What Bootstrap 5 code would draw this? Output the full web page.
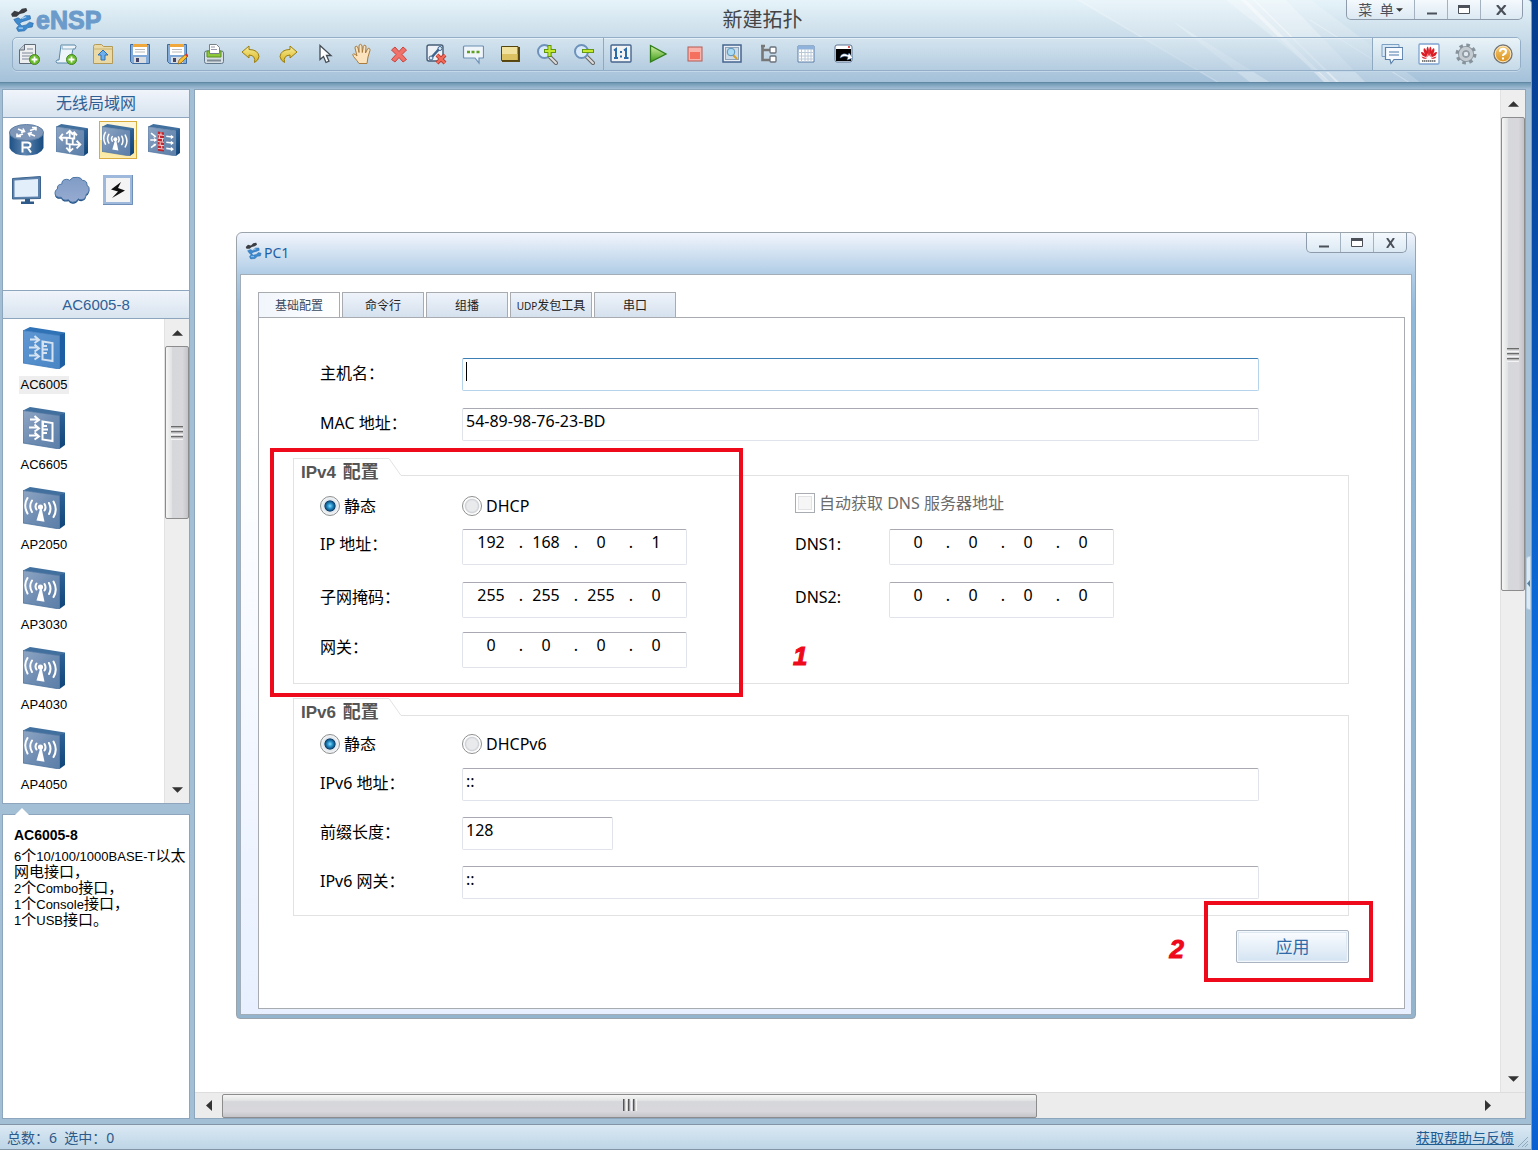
<!DOCTYPE html>
<html lang="zh-CN">
<head>
<meta charset="utf-8">
<meta name="viewport" content="width=device-width, initial-scale=1">
<title>eNSP</title>
<link href="https://cdn.jsdelivr.net/npm/bootstrap@5.3.0/dist/css/bootstrap.min.css" rel="stylesheet">
<style>
:root{--ui:"Noto Sans","Noto Sans CJK SC",sans-serif;--arial:"Liberation Sans","Noto Sans CJK SC",sans-serif;--line:#8ea6bd;--frame:#a3bfd6;--ink:#2f5f95;--alert:#ee0a1a}
body{font-family:var(--ui);font-size:16px;color:#000;background:linear-gradient(#053b8c,#0d6fe0 60%,#0d74e6 85%,#0a5fd0);padding-right:6px}
button{padding:0;border:0;background:none;color:inherit}
.app-shell{background:var(--frame);border-right:1px solid #7a9db8;border-top-right-radius:4px}
.app-head{height:83px;background:linear-gradient(#e6f3f9,#c9dce9 45%,#a4c1da);border-bottom:1px solid #6289a4;border-top-right-radius:4px;overflow:hidden}
.streaks{right:0;top:0;width:640px;height:83px;pointer-events:none}
.head-grid{display:grid;grid-template-columns:1fr auto 1fr;height:37px;padding:0 8px 0 2px}
.brand-text{font:bold 25px/30px var(--arial);-webkit-text-stroke:1px #6b9bcb;color:#6b9bcb}
.doc-title{font-size:20px;line-height:40px;color:#444}
.win-ctl{height:20px;border:1px solid #8d9bab;border-top:0;border-radius:0 0 5px 5px;background:linear-gradient(#f4f9fd,#dce9f3);color:#4b5059}
.win-ctl button{width:33px;height:100%;border-left:1px solid #a4b2c0;display:flex;align-items:center;justify-content:center}
.win-ctl button:first-child{border-left:0}
.win-ctl .menu-btn{width:67px;font-size:14px;line-height:16px;white-space:pre;gap:2px}
.win-ctl .wide-btn{width:42px}
.tool-strip{margin:0 10px 0 12px;height:34px;border:1px solid #93aec6;border-radius:5px;background:linear-gradient(rgba(220,234,243,.6),rgba(186,208,226,.5));box-shadow:inset 0 1px #e6f1f7,0 1px #c3d8e8}
.tool-group{gap:6px}
.tool-group button{width:31px;height:100%;display:flex;align-items:center;justify-content:center}
.tool-group svg{width:22px;height:22px}
.group-a{padding-right:4px;border-right:1px solid #8fa9c1;margin-right:1px}
.group-c{border-left:1px solid #8fa9c1;padding:0 2px 0 3px;background:linear-gradient(#e9f3f8,#c6dae8);border-radius:0 4px 4px 0}
.work{min-height:0;padding:6px 5px 5px 2px;gap:4px;background:linear-gradient(#6f97b3,var(--frame) 6px)}
.side-col{width:188px}
.side-box{border:1px solid var(--line);background:#fff}
.side-title{height:28px;line-height:27px;text-align:center;color:var(--ink);background:linear-gradient(#f0f4fb,#d8e4ef);border-bottom:1px solid var(--line);margin:0;font-weight:400}
.title-han{font-size:16px;font-family:var(--ui)}
.title-lat{height:29px;font-size:15px;font-family:var(--arial);border-top:1px solid var(--line)}
.palette{height:172px;padding-top:3px;display:grid;grid-template-columns:repeat(4,46px);grid-auto-rows:38px;row-gap:12px;justify-items:center;align-content:start}
.palette button{width:38px;height:38px;display:flex;align-items:center;justify-content:center;border:1px solid transparent}
.palette button.picked{border:1px solid #d9ac3f;background:linear-gradient(#fdf5d8 50%,#fbe084 50%,#fdedb0)}
.dev-list{height:484px}
.dev-items{padding:8px 0 0 16px}
.dev-items button{display:flex;flex-direction:column;align-items:center;gap:7px;height:80px;font:13px/18px var(--arial)}
.dev-items span{width:50px;text-align:center}
.dev-items .picked span{background:#eee}
.vbar{width:25px;background:#eee;border-left:1px solid #e2e2e2}
.vbar button,.hbar button{flex:none;width:27px;height:27px;display:flex;align-items:center;justify-content:center}
.vbar button{width:24px}
.vbar .thumb{width:24px;border:1px solid #8c8c8c;border-radius:2px;background:linear-gradient(90deg,#f6f6f6,#e2e3e4 25%,#d6d7da 30%,#d8d8dc 75%,#c3c3c9)}
.hbar{height:26px;background:#ececec;border-top:1px solid #ddd}
.hbar .thumb{height:24px;border:1px solid #8c8c8c;border-radius:2px;background:linear-gradient(#f6f6f6,#e2e3e4 25%,#d6d7da 30%,#d8d8dc 75%,#c3c3c9)}
.thumb{display:flex;align-items:center;justify-content:center}
.side-thumb{height:173px}
.main-thumb{flex:0 0 474px}
.low-thumb{flex:0 0 815px}
.info{margin-top:10px;padding:11px 0 0 11px;font:13px/16px var(--arial);position:relative}
.info::before{content:"";position:absolute;left:12px;top:-7px;border:7px solid transparent;border-top:0;border-bottom-color:#fff}
.info h3{font:bold 14px/18px var(--arial);margin:0 0 4px}
.info .han{font-size:15px;line-height:16px}
.info div{white-space:nowrap;height:16px}
.canvas-frame{border:1px solid var(--line);background:#fff}
.sheet{position:relative;background:#fff}
.flap{right:0;top:473px;width:5px;height:54px;background:#dceaf3;border:1px solid #b8cede;border-radius:3px 0 0 3px}
.flap svg{position:absolute;left:0;top:23px}
.status{height:26px;border-top:1px solid #8395a5;border-bottom:1px solid #8395a5;background:linear-gradient(#dbe9f4,#bdd5e6);padding:0 3px 0 7px;font-size:14px;line-height:26px;color:#2d5a88}
.status a{color:#1e5c94}
/* PC settings window */
.pc-win{position:absolute;left:41px;right:84px;top:142px;border:1px solid #9ba3ab;border-radius:6px 6px 4px 4px;padding:0 3px 3px 3px;background:linear-gradient(#f2f5fc,#b0cde6 41px,#8fb8d9 80px,#94b3cc)}
.pc-head{height:41px;padding:0 5px 0 5px}
.pc-name{font-size:14px;line-height:40px;color:#1f5fa5;padding-left:1px}
.pc-body{border:1px solid #a3adb8;background:linear-gradient(#fff 20%,#e8f0ff);padding:17px 6px 5px 17px}
.tab-row{gap:2px;border:0;flex-wrap:nowrap}
.tab-row .nav-link{width:82px;height:25px;padding:0;border:1px solid #a8acb0;border-bottom:0;border-radius:0;font-size:12px;line-height:25px;color:#222;text-align:center;background:linear-gradient(#eef3fa,#d5e1ee);margin:0;white-space:nowrap}
.tab-row .nav-link.active{background:linear-gradient(90deg,#f1f6fc,#fff);color:#3a4a5e;border-color:#a8acb0}
.tab-row small{font-size:10px}
.pane{border:1px solid #a8acb0;background:#fff;padding:40px 55px 45px 34px}
.field-row{display:flex;align-items:center;padding:0 90px 0 27px;margin-bottom:17px}
.field-row .cap{padding-bottom:3px}
.cap{flex:none;width:142px}
.txt{height:33px;border:1px solid #e1e3ea;border-top-color:#a9a9b1;border-radius:2px;padding:0 3px 7px;font-size:16px;line-height:24px;outline:0;background:#fff;min-width:0}
.txt.hot{border-color:#b5d3ea;border-top-color:#3b7fb5}
.caret{position:absolute;left:4px;top:4px;width:1px;height:19px;background:#000}
.len{width:151px}
.grp{position:relative;margin-bottom:14px}
.grp legend{display:flex;float:none;height:18px;margin:0;font:bold 17px/26px var(--arial);color:#555}
.grp legend span{width:96px;padding-left:7px;border:solid #e2e2e2;border-width:1px 0 0 1px;white-space:nowrap}
.grp legend em{font-size:18px;font-style:normal;margin-left:2px}
.grp legend svg{flex:none;width:12px;height:18px}
.grp legend i{flex:1;border-bottom:1px solid #e2e2e2}
.grp-in{border:solid #e2e2e2;border-width:0 1px 1px 1px}
.v4{padding:15px 0 15px 26px}
.v6{padding:13px 0 16px 0}
.v6 .field-row{padding:0 89px 0 26px;margin-bottom:16px}
.v6 .pick-row{padding-left:26px;margin-bottom:9px}
.v4-left{width:475px}
.pick-row{display:flex;height:30px;align-items:center;margin-bottom:8px}
.opt{display:flex;align-items:center;gap:4px;width:142px}
.opt input{flex:none;margin:0;width:20px;height:20px;appearance:none}
.opt input[type=radio]{border-radius:50%;border:1px solid #8e8f8f;background:radial-gradient(#e8eaec 0 40%,#cfd3d7 52%,#fff 62%)}
.opt input[type=radio]:checked{background:radial-gradient(circle closest-side,#8fdcfa 0,#2a9ad4 25%,#0b3f6c 58%,#dfe5ea 66%,#f4f6f8 100%)}
.opt input[type=checkbox]{border:1px solid #a9adb1;border-radius:0;background:#f6f6f6;box-shadow:inset 0 0 0 2px #fff,inset 0 0 0 3px #e3e3e6}
.wide-opt{width:auto;color:#6b6b6b;padding-bottom:6px}
.ip-row{display:flex;align-items:center;margin-bottom:17px}
.ip-row:nth-child(3){margin-bottom:14px}
.ip-row .cap{padding-bottom:6px}
.cap.dns-cap{width:94px}
.ip{display:flex;width:225px;height:36px;border:1px solid #e1e3ea;border-top-color:#a9a9b1;border-radius:2px;padding:0 8px}
.ip input{width:40px;height:24px;border:0;padding:0;text-align:center;outline:0;font-size:16px;background:none}
.ip b{width:15px;font-weight:400;line-height:24px;text-align:right;padding-right:3px}
.apply{width:113px;height:33px;border:1px solid #a9b4c0;border-radius:2px;background:linear-gradient(#fbfdff,#d3e3f2);box-shadow:inset 0 0 0 1px #f3f8fd,inset 0 0 0 2px #dde8f3;color:#2f6aa8;font-size:17px;line-height:28px}
/* red call-outs drawn over the form */
.ring{position:absolute;border:4px solid var(--alert);pointer-events:none;z-index:2}
.ring-v4{left:-23px;top:-28px;width:473px;height:249px}
.ring-go{right:-24px;top:-29px;width:169px;height:81px}
.num{position:absolute;font:italic bold 26px/27px var(--arial);color:var(--alert);-webkit-text-stroke:1px var(--alert)}
.num-1{left:500px;top:167px}
.num-2{right:165px;top:6px}
</style>
<script src="https://cdn.jsdelivr.net/npm/bootstrap@5.3.0/dist/js/bootstrap.bundle.min.js"></script>
</head>
<body class="vh-100 d-flex overflow-hidden">
<svg width="0" height="0" class="position-absolute">
<defs>
<linearGradient id="gF" x1="0" y1="0" x2="1" y2="1"><stop offset="0" stop-color="#8fa6c4"/><stop offset=".5" stop-color="#6f8db3"/><stop offset="1" stop-color="#5c7fa8"/></linearGradient>
<linearGradient id="gB" x1="0" y1="0" x2="1" y2="1"><stop offset="0" stop-color="#5f98d3"/><stop offset="1" stop-color="#4a85c4"/></linearGradient>
<linearGradient id="gS" x1="0" y1="0" x2="0" y2="1"><stop offset="0" stop-color="#2e6298"/><stop offset="1" stop-color="#0f4478"/></linearGradient>
<linearGradient id="gR" x1="0" y1="0" x2="1" y2="0"><stop offset="0" stop-color="#1d5186"/><stop offset=".45" stop-color="#5d85b0"/><stop offset="1" stop-color="#174b80"/></linearGradient>
<linearGradient id="gC" x1="0" y1="0" x2="0" y2="1"><stop offset="0" stop-color="#7f9cc6"/><stop offset="1" stop-color="#97abd0"/></linearGradient>
<linearGradient id="gY" x1="0" y1="0" x2="0" y2="1"><stop offset="0" stop-color="#f8ee9a"/><stop offset="1" stop-color="#d9b31c"/></linearGradient>
<linearGradient id="gG" x1="0" y1="0" x2="0" y2="1"><stop offset="0" stop-color="#d5f2a5"/><stop offset="1" stop-color="#3f9c1b"/></linearGradient>
<linearGradient id="gO" x1="0" y1="0" x2="0" y2="1"><stop offset="0" stop-color="#f6cd7a"/><stop offset="1" stop-color="#d98e14"/></linearGradient>
</defs>
<symbol id="box" viewBox="0 0 42 42"><path d="M0 3.500 7 0 42 5.500 36.500 9z" fill="#41709f"/><path d="M36.500 8 42 5.500V38l-5.500 4z" fill="url(#gS)"/><path d="M0 3.500 36.500 8.500V42L0 36z" fill="url(#gF)" stroke="#4b729d" stroke-width=".8"/></symbol>
<symbol id="boxB" viewBox="0 0 42 42"><path d="M0 3.500 7 0 42 5.500 36.500 9z" fill="#2f72b5"/><path d="M36.500 8 42 5.500V38l-5.500 4z" fill="#1d5ea3"/><path d="M0 3.500 36.500 8.500V42L0 36z" fill="url(#gB)" stroke="#3c7abb" stroke-width=".8"/></symbol>
<symbol id="acG" viewBox="0 0 42 42"><g fill="none" stroke="#fff" stroke-width="2"><path d="M7 12.500h8M11.500 9l4.500 4-4.500 3M6 20.500h9M11.500 17.500l4.500 4-4.500 3M6 28.500h9M11.500 25.500l4.500 4-4.500 3"/><path d="M19.500 14.500l10 1.500v18l-10-1.500zM20 19h4M20 22.500h5M20 26h4M20 18v-3"/></g></symbol>
<symbol id="apG" viewBox="0 0 42 42"><path d="M18 18.500 13.500 33.500l8 1.300z" fill="#fff"/><circle cx="17.500" cy="20" r="2.600" fill="#fff"/><g fill="none" stroke="#fff" stroke-width="2" stroke-linecap="round"><path d="M13.500 16.500q-2 2.800 0 6M9 13.500q-3.500 5.500 0 11.500M4.500 11q-4.500 7 0 15.500M21.500 17q2 3.500 0 6.500M26 16q3 6 0 11M30.500 14.500q4.500 8 0 15.500"/></g></symbol>
<symbol id="mark" viewBox="0 0 24 24"><path d="M1 6.500 4 3.500 8 4.500 11 1.500 15 1 16 3.500 13 5.500 9 6.500 6 9 2 9z" fill="#3a3d42"/><path d="M3.500 11.500 7.500 10 10 11.500 14 8 18.500 8 19 11 15 12.500 11 13.500 9 15.500 11 17.500 15 16.500 18 14 21.500 15 20.500 18.500 16.500 19 13.500 22 7.500 22.500 6 19.500 8 17 5.500 14.500z" fill="#3d8ace" stroke="#2565a6" stroke-width=".6"/><path d="M11 10.500 15 9M8 19.500l4 0" stroke="#a8d2f3"/></symbol>
<symbol id="up" viewBox="0 0 12 6"><path d="M0 6 6 0l6 6z" fill="#333"/></symbol>
<symbol id="down" viewBox="0 0 12 6"><path d="M0 0h12L6 6z" fill="#333"/></symbol>
<symbol id="grip" viewBox="0 0 13 15"><path d="M0 1.500h12M0 6.500h12M0 11.500h12" stroke="#6b6b6b"/><path d="M0 2.500h12M0 7.500h12M0 12.500h12" stroke="#b4b4b4"/><path d="M0 4.500h12M0 9.500h12M0 14.500h12" stroke="#f4f4f4"/></symbol>
<symbol id="plus" viewBox="0 0 10 10"><circle cx="5" cy="5" r="4.600" fill="#6cbb2e" stroke="#3c7f17" stroke-width=".8"/><path d="M5 2.300v5.400M2.300 5h5.400" stroke="#fff" stroke-width="1.600"/></symbol>
</svg>

<div class="app-shell d-flex flex-column flex-grow-1">
<header class="app-head position-relative">
  <svg class="streaks position-absolute" viewBox="0 0 640 83"><g fill="#fff"><path d="M190 0h230l110 83H330z" opacity=".18"/><path d="M335 0h60l80 83H440z" opacity=".25"/><path d="M350 0h5l85 83h-6zM362 0h2l85 83h-3z" opacity=".4"/><path d="M190 0l140 83h-3L186 0z" opacity=".3"/><path d="M420 20l100 63h-2L418 20z" opacity=".3"/><path d="M280 20l100 63h-20z" opacity=".25"/></g></svg>
  <div class="head-grid position-relative">
    <div class="d-flex align-items-center ps-1"><svg width="26" height="26" class="ms-1"><use href="#mark"/></svg><span class="brand-text">eNSP</span></div>
    <div class="doc-title">新建拓扑</div>
    <div class="win-ctl d-flex ms-auto">
      <button class="menu-btn">菜  单<svg width="7" height="4"><use href="#down"/></svg></button>
      <button aria-label="最小化"><svg width="11" height="11"><path d="M1 9.500h10" stroke="#4b5059" stroke-width="2"/></svg></button>
      <button aria-label="最大化"><svg width="12" height="10"><path d="M.5.500h11v8H.5z" fill="#fff" stroke="#4b5059"/><path d="M0 1.500h12" stroke="#4b5059" stroke-width="3"/></svg></button>
      <button class="wide-btn" aria-label="关闭"><svg width="11" height="10"><path d="M1 0l8.500 10M9.500 0 1 10" stroke="#4b5059" stroke-width="2.200"/></svg></button>
    </div>
  </div>
  <div class="tool-strip d-flex position-relative">
    <div class="tool-group group-a d-flex">
      <button aria-label="新建拓扑"><svg viewBox="0 0 22 22"><path d="M6.500 1.500h11v19H1.500V7z" fill="#eceef0" stroke="#5f6b78"/><path d="M6.500 1.500V7h-5" fill="#c4cad1" stroke="#5f6b78"/><path d="M9 6h6M4 10h11M4 13h11M4 16h8" stroke="#a2abb5" stroke-width="1.400"/><use href="#plus" x="11" y="11" width="11" height="11"/></svg></button>
      <button aria-label="新建试卷"><svg viewBox="0 0 22 22"><path d="M6 2h14q2 1 0 4h-2l-3 14H2q-2-1 0-3h2z" fill="#eef5fa" stroke="#5b88a8"/><path d="M6 2q2 1 1 4h12" fill="none" stroke="#8fb0c6"/><use href="#plus" x="11" y="11" width="11" height="11"/></svg></button>
      <button aria-label="打开"><svg viewBox="0 0 22 22"><path d="M1.500 3.500q0-2 2-2h6l2 2h9v17h-19z" fill="#ead9a5" stroke="#b39a58"/><path d="M1.500 6h19" stroke="#c9b273"/><path d="M11 7l5 5h-3v5H9v-5H6z" fill="#6db0ee" stroke="#2e70b5"/></svg></button>
      <button aria-label="保存"><svg viewBox="0 0 22 22"><path d="M1.500 1.500h19v19h-17l-2-2z" fill="#82abd9" stroke="#3d6ca3"/><path d="M4 1h14v3H4z" fill="#f0a83c"/><path d="M4 4h14v8H4z" fill="#fff"/><path d="M6 6.500h10M6 9h10" stroke="#bbb"/><path d="M5 14h12v6H5z" fill="#dadde0"/><path d="M7 15h3v4H7z" fill="#446"/></svg></button>
      <button aria-label="另存为"><svg viewBox="0 0 22 22"><path d="M1.500 1.500h19v19h-17l-2-2z" fill="#82abd9" stroke="#3d6ca3"/><path d="M4 1h14v3H4z" fill="#f0a83c"/><path d="M4 4h14v8H4z" fill="#fff"/><path d="M6 6.500h10M6 9h10" stroke="#bbb"/><path d="M5 14h12v6H5z" fill="#dadde0"/><path d="M7 15h3v4H7z" fill="#446"/><path d="M12 21l1-4 7-6 2 2-7 7z" fill="#fbc02d" stroke="#8a5a10" stroke-width=".7"/><path d="M19 12l2-1.500L22.500 13 21 14z" fill="#d33"/></svg></button>
      <button aria-label="打印"><svg viewBox="0 0 22 22"><rect x="1.500" y="8" width="19" height="12.500" rx="2" fill="#d6dde3" stroke="#62798b"/><path d="M4 8h14v6H4z" fill="#8cc83a" stroke="#5a9120"/><path d="M6.500 1.500h7l3 3v6h-10z" fill="#fff" stroke="#78808a"/><path d="M8 4h4M8 6.500h6" stroke="#99a"/><path d="M4 16.500h14v2H4z" fill="#7d8b97"/></svg></button>
      <button aria-label="撤销"><svg viewBox="0 0 22 22"><path d="M2 9l7-6v3.500q9 0 10 7-.5 4-4.500 6 1.500-7-5.500-7.500V15z" fill="url(#gY)" stroke="#9a7d10"/></svg></button>
      <button aria-label="恢复"><svg viewBox="0 0 22 22"><path d="M20 9l-7-6v3.500q-9 0-10 7 .5 4 4.500 6-1.500-7 5.500-7.500V15z" fill="url(#gY)" stroke="#9a7d10"/></svg></button>
      <button aria-label="选择"><svg viewBox="0 0 22 22"><path d="M6 2.500v14l3.500-3 2.500 6 3-1.300-2.500-5.700H17z" fill="#fff" stroke="#444c55" stroke-width="1.300"/></svg></button>
      <button aria-label="拖动"><svg viewBox="0 0 22 22"><path d="M8 20.500q-2-3-5.500-7-1.500-2.500 0-2.700 1.500 0 3.500 2.200L4 5q0-1.800 1.200-1.800T7 5l1 4.500V3q.2-1.700 1.400-1.700T11 3l.3 6.500 1-6q.4-1.500 1.600-1.300T15 4l-.5 6 2-4q.7-1.200 1.700-.7t.8 2L17 14l-1 6.500z" fill="#fbe3bd" stroke="#a87b3e"/></svg></button>
      <button aria-label="删除"><svg viewBox="0 0 22 22"><path d="M7 4l4 4.500L15 4l3.500 3L14 11.500l4.500 5L15 19l-4-4.500L7 19l-3.500-2.500 4.500-5L3.500 7z" fill="#f0706a" stroke="#c8453f"/></svg></button>
      <button aria-label="删除连线"><svg viewBox="0 0 22 22"><rect x="2" y="2" width="16" height="16" rx="2" fill="#eef2f6" stroke="#475d77" stroke-width="1.400"/><path d="M6 15 15 5" stroke="#3d6590" stroke-width="2.600"/><circle cx="6" cy="15" r="2" fill="#dbe9f8" stroke="#3d6590"/><circle cx="15" cy="5.500" r="2" fill="#dbe9f8" stroke="#3d6590"/><path d="M12 12l8 8M20 12l-8 8" stroke="#b63a30" stroke-width="4"/><path d="M12 12l8 8M20 12l-8 8" stroke="#f26a5a" stroke-width="2.400"/></svg></button>
      <button aria-label="文本"><svg viewBox="0 0 22 22"><path d="M2.500 3h18q1 0 1 1v10q0 1-1 1H17v5l-4-5H2.500q-1 0-1-1V4q0-1 1-1z" fill="#f0f5fa" stroke="#6b8fb3" stroke-width="1.200"/><path d="M5 9h3M9.500 9h3M14.500 9h3" stroke="#5fa022" stroke-width="2.600"/></svg></button>
      <button aria-label="调色板"><svg viewBox="0 0 22 22"><path d="M3 4h18v15H3z" fill="#5c4a14"/><path d="M2.500 3.500h16.500v14h-16.500z" fill="#f1e2a0" stroke="#54450f"/><path d="M3 11h15.500v6H3z" fill="#dcc263"/></svg></button>
      <button aria-label="放大"><svg viewBox="0 0 22 22"><path d="M14 14l6 6" stroke="#666" stroke-width="4" stroke-linecap="round"/><path d="M14 14l6 6" stroke="#ddd" stroke-width="2" stroke-linecap="round"/><circle cx="8.500" cy="8.500" r="6.500" fill="#d8eafa" stroke="#6d91bb" stroke-width="2"/><path d="M13.500 2v12M8 8h12" stroke="#5d9412" stroke-width="4"/><path d="M13.500 3v10M9 8h10" stroke="#c6e82e" stroke-width="2.200"/></svg></button>
      <button aria-label="缩小"><svg viewBox="0 0 22 22"><path d="M14 14l6 6" stroke="#666" stroke-width="4" stroke-linecap="round"/><path d="M14 14l6 6" stroke="#ddd" stroke-width="2" stroke-linecap="round"/><circle cx="8.500" cy="8.500" r="6.500" fill="#d8eafa" stroke="#6d91bb" stroke-width="2"/><path d="M9 8h12" stroke="#5d9412" stroke-width="4"/><path d="M10 8h10" stroke="#c6e82e" stroke-width="2.200"/></svg></button>
    </div>
    <div class="tool-group d-flex">
      <button aria-label="原始大小"><svg viewBox="0 0 22 22"><rect x="1" y="2" width="20" height="17" rx="1" fill="#f3f3f3" stroke="#45658f" stroke-width="1.400"/><path d="M4 7.500l2-1.500v9M4 15h4M14 7.500 16 6v9M14 15h4.500M11 8v2M11 12.500v2" fill="none" stroke="#2d6cab" stroke-width="2"/></svg></button>
      <button aria-label="开启设备"><svg viewBox="0 0 22 22"><path d="M3.500 2.500 19 11 3.500 19z" fill="url(#gG)" stroke="#2f7d18" stroke-width="1.300"/></svg></button>
      <button aria-label="停止设备"><svg viewBox="0 0 22 22"><rect x="4" y="4" width="14" height="14" fill="#f8b3ab" stroke="#b65a55"/><rect x="6" y="9" width="10" height="7" fill="#f4705f"/></svg></button>
      <button aria-label="数据抓包"><svg viewBox="0 0 22 22"><rect x="2" y="2" width="18" height="17" fill="#e9eff5" stroke="#44658e" stroke-width="1.500"/><rect x="4.500" y="4.500" width="13" height="12" fill="#ccd9e6" stroke="#8da3ba"/><path d="M12 12l4 4" stroke="#d2a030" stroke-width="2"/><circle cx="10" cy="9" r="3.800" fill="#a9dcf4" stroke="#5991b8"/></svg></button>
      <button aria-label="显示接口"><svg viewBox="0 0 22 22"><path d="M4.500 2v15H12M4.500 7H12M3 3h4" fill="none" stroke="#777" stroke-width="2.600"/><rect x="12" y="4" width="6" height="6" rx="1" fill="#fff" stroke="#69727c" stroke-width="1.300"/><rect x="12" y="13" width="6" height="6" rx="1" fill="#fff" stroke="#69727c" stroke-width="1.300"/></svg></button>
      <button aria-label="显示网格"><svg viewBox="0 0 22 22"><path d="M3 3h16v16H3z" fill="#fff" stroke="#587da8"/><path d="M3 3h16v3.500H3z" fill="#8fb3da"/><path d="M6.500 6v13M10 6v13M13 6v13M16 6v13M3 9.500h16M3 13h16M3 16h16" stroke="#b9c8d8"/></svg></button>
      <button aria-label="打开命令行"><svg viewBox="0 0 22 22"><rect x="3" y="2" width="17" height="17" rx="2" fill="#fff" stroke="#5a7390"/><path d="M4 6h15v12H4z" fill="#000"/><path d="M16 4h2" stroke="#d22" stroke-width="1.500"/><path d="M8 15q1-5 6-4l2 1 1-2 4 5-6 2 1-3q-4-2-8 1z" fill="#fff" stroke="#3b6a9c" stroke-width=".5"/></svg></button>
    </div>
    <div class="tool-group group-c d-flex ms-auto">
      <button aria-label="论坛"><svg viewBox="0 0 22 22"><path d="M1 1.500h17v12H1z" fill="#d8e8f4" stroke="#7c9fc4"/><path d="M4.500 4.500h17.200v12H13l-3 4-1-4H4.500z" fill="#f7fbff" stroke="#5b80aa" stroke-width="1.200"/><path d="M8 9h10M8 12h10" stroke="#86a5c6" stroke-width="1.300"/></svg></button>
      <button aria-label="华为官网"><svg viewBox="0 0 22 22"><rect x="1" y="1" width="20" height="20" rx="1" fill="#fff" stroke="#7fa3cf" stroke-width="1.300"/><g fill="#dc1d25"><path d="M10.700 13.500Q7 7 9.500 3.500q2 1 1.200 10zM11.300 13.500Q15 7 12.500 3.500q-2 1-1.200 10zM9.800 14Q4 9 6 5q3 1 3.800 9zM12.200 14Q18 9 16 5q-3 1-3.800 9zM9 14.500Q3 13 3 9q4 0 6 5.500zM13 14.500Q19 13 19 9q-4 0-6 5.500zM9 15.300Q5 17 3.500 13.500zM13 15.300q4 1.700 5.500-1.800z"/></g><path d="M4 18h14" stroke="#555" stroke-width="1.600" stroke-dasharray="1.500 .5"/></svg></button>
      <button aria-label="设置"><svg viewBox="0 0 22 22"><circle cx="11" cy="11" r="8.500" fill="none" stroke="#87929b" stroke-width="4" stroke-dasharray="3.400 3.280"/><circle cx="11" cy="11" r="5.500" fill="none" stroke="#87929b" stroke-width="5"/><circle cx="11" cy="11" r="5.500" fill="none" stroke="#c5ccd1" stroke-width="3.400"/><circle cx="11" cy="11" r="2.800" fill="#dfe8ee" stroke="#87929b"/></svg></button>
      <button aria-label="帮助"><svg viewBox="0 0 22 22"><circle cx="11" cy="11" r="9" fill="url(#gO)" stroke="#75777a" stroke-width="1.400"/><circle cx="11" cy="11" r="7.800" fill="none" stroke="#f8e7c0"/><path d="M8 8.800q0-3 3-3t3 2.700q0 1.700-1.800 2.500-1.200.6-1.200 2M11 14.500v2" fill="none" stroke="#fff" stroke-width="2.100"/></svg></button>
    </div>
  </div>
</header>

<div class="work d-flex flex-grow-1 position-relative">
  <aside class="side-col d-flex flex-column flex-shrink-0">
    <section class="side-box">
      <h2 class="side-title title-han">无线局域网</h2>
      <div class="palette">
        <button aria-label="路由器"><svg width="35" height="32" viewBox="0 0 35 32"><path d="M.5 8v16q3 7.500 17 7.500T34.500 24V8z" fill="url(#gR)"/><ellipse cx="17.500" cy="8.500" rx="17" ry="8" fill="#7e97b9" stroke="#5f7fa6"/><g stroke="#fff" stroke-width="1.600" fill="none"><path d="M9 5l6 2.500M12 8.500l3.500-1-1.500-3M26 12l-6-2.500M23 8.500l-3.500 1 1.500 3M8 12l6-2M8 9.500V12.500h4M27 4.500l-6 2M23 3.500h4V6.500"/></g><path d="M13.500 28.500V18.500h5q3 0 3 2.500t-3 2.500h-5m5 0 3.500 5" fill="none" stroke="#fff" stroke-width="2"/></svg></button>
        <button aria-label="交换机"><svg width="32" height="32" viewBox="0 0 42 42"><use href="#box"/><g fill="none" stroke="#fff" stroke-width="2.400"><path d="M14 18l8 1v8l-8-1zM18 18v-8M13.500 13l4.500-4 4.500 5M22 19h2V12M20.500 14l3.500-3 3.500 4M14 18H5M9 13l-4 5 4 4M22 27h9M27 22l5 5-5 5M18 27v8M13.500 31l4.500 5 4.500-4"/></g></svg></button>
        <button class="picked" aria-label="无线局域网"><svg width="32" height="32" viewBox="0 0 42 42"><use href="#box"/><use href="#apG"/></svg></button>
        <button aria-label="防火墙"><svg width="32" height="32" viewBox="0 0 42 42"><use href="#box"/><path d="M13 10l8 1v25l-8-1z" fill="#c2252b"/><path d="M13 14l8 1M13 18.500l8 1M13 23l8 1M13 27.500l8 1M13 32l8 1M17 11v4M15 15v4M19 19v4M16 24v4M18 28v4" stroke="#fff" stroke-width="1"/><g stroke="#fff" stroke-width="2"><path d="M4 12l5 4M3 21h7M4 31l5-4M24 16l8 1M24 24l8 1M24 32l8 1"/></g><path d="M7 18l4-1-2-3zM8 18.500l4 2.500-4 2.500zM7 26l4 0-2 4zM30 14l4 3-4 3zM30 22l4 3-4 3zM30 30l4 3-4 3z" fill="#fff"/></svg></button>
        <button aria-label="终端"><svg width="29" height="28" viewBox="0 0 29 28"><path d="M.5 2.500 28.500.500v22l-28 .5z" fill="#5c82ac" stroke="#3c648f"/><path d="M2.500 4.500 26 3v17.500l-23.500.5z" fill="#e3eefb"/><path d="M13 23h5v2.500h4V28H9v-2.500h4z" fill="#2e5a8a"/></svg></button>
        <button aria-label="其它设备"><svg width="37" height="31" viewBox="0 0 37 31"><g id="cl"><path d="M8 9Q8 4 13 4q2 0 3 1 3-4 8-3 4 0 5 3 5 0 5 5 3 2 2 6-1 3-3 3.500 0 5-5 5.500-2 0-3-1-2 4-6 3.500-3 0-4-2.500-6 1.500-7.500-2.500Q1 23 1 18q0-3 2.500-4Q3 9 8 9z" fill="#1f5288" transform="translate(0 1.500)"/></g><path d="M8 9Q8 4 13 4q2 0 3 1 3-4 8-3 4 0 5 3 5 0 5 5 3 2 2 6-1 3-3 3.500 0 5-5 5.500-2 0-3-1-2 4-6 3.500-3 0-4-2.500-6 1.500-7.500-2.500Q1 23 1 18q0-3 2.500-4Q3 9 8 9z" fill="url(#gC)" stroke="#4a74a6"/></svg></button>
        <button aria-label="设备连线"><svg width="30" height="30" viewBox="0 0 30 30"><path d="M0 0h30v30H0z" fill="#9db8da"/><path d="M0 29.500h29.500V0" fill="none" stroke="#6f8fb8"/><path d="M3 3h24v24H3z" fill="#f4f4f4"/><path d="M18 7 8 14.500l7 2L9 23l13-7.500-7-2.500z" fill="#111"/></svg></button>
      </div>
      <h2 class="side-title title-lat">AC6005-8</h2>
      <div class="dev-list d-flex">
        <div class="dev-items flex-grow-1 overflow-hidden">
          <button class="picked"><svg width="42" height="42"><use href="#boxB"/><use href="#acG" opacity=".75"/></svg><span>AC6005</span></button>
          <button><svg width="42" height="42"><use href="#box"/><use href="#acG"/></svg><span>AC6605</span></button>
          <button><svg width="42" height="42"><use href="#box"/><use href="#apG"/></svg><span>AP2050</span></button>
          <button><svg width="42" height="42"><use href="#box"/><use href="#apG"/></svg><span>AP3030</span></button>
          <button><svg width="42" height="42"><use href="#box"/><use href="#apG"/></svg><span>AP4030</span></button>
          <button><svg width="42" height="42"><use href="#box"/><use href="#apG"/></svg><span>AP4050</span></button>
        </div>
        <div class="vbar d-flex flex-column">
          <button aria-label="向上"><svg width="11" height="6"><use href="#up"/></svg></button>
          <div class="thumb side-thumb"><svg width="13" height="15"><use href="#grip"/></svg></div>
          <button class="mt-auto" aria-label="向下"><svg width="11" height="6"><use href="#down"/></svg></button>
        </div>
      </div>
    </section>
    <section class="side-box info flex-grow-1">
      <h3>AC6005-8</h3>
      <div>6<span class="han">个</span>10/100/1000BASE-T<span class="han">以太</span></div>
      <div><span class="han">网电接口，</span></div>
      <div>2<span class="han">个</span>Combo<span class="han">接口，</span></div>
      <div>1<span class="han">个</span>Console<span class="han">接口，</span></div>
      <div>1<span class="han">个</span>USB<span class="han">接口。</span></div>
    </section>
  </aside>

  <main class="canvas-frame flex-grow-1 d-flex flex-column">
    <div class="d-flex flex-grow-1">
      <div class="sheet flex-grow-1">
        <section class="pc-win">
          <div class="pc-head d-flex">
            <svg width="18" height="20" class="mt-2"><use href="#mark"/></svg>
            <span class="pc-name">PC1</span>
            <div class="win-ctl d-flex ms-auto">
              <button aria-label="最小化"><svg width="11" height="11"><path d="M1 9.500h10" stroke="#4b5059" stroke-width="2"/></svg></button>
              <button aria-label="最大化"><svg width="12" height="10"><path d="M.5.500h11v8H.5z" fill="#fff" stroke="#4b5059"/><path d="M0 1.500h12" stroke="#4b5059" stroke-width="3"/></svg></button>
              <button aria-label="关闭"><svg width="9" height="10"><path d="M1 0l7 10M8 0 1 10" stroke="#4b5059" stroke-width="2"/></svg></button>
            </div>
          </div>
          <div class="pc-body">
            <nav class="nav nav-tabs tab-row">
              <button class="nav-link active">基础配置</button>
              <button class="nav-link">命令行</button>
              <button class="nav-link">组播</button>
              <button class="nav-link"><small>UDP</small>发包工具</button>
              <button class="nav-link">串口</button>
            </nav>
            <form class="pane" onsubmit="return false">
              <div class="field-row"><label class="cap" for="host">主机名：</label><div class="position-relative d-flex flex-grow-1"><input id="host" class="txt hot flex-grow-1" type="text"><i class="caret"></i></div></div>
              <div class="field-row"><label class="cap" for="mac">MAC 地址：</label><input id="mac" class="txt flex-grow-1" type="text" value="54-89-98-76-23-BD"></div>

              <fieldset class="grp">
                <legend><span>IPv4 <em>配置</em></span><svg viewBox="0 0 12 18"><path d="M0 .5 12 17.500" stroke="#e2e2e2" fill="none"/></svg><i></i></legend>
                <div class="grp-in v4 d-flex">
                  <div class="v4-left flex-shrink-0">
                    <div class="pick-row"><label class="opt"><input type="radio" name="v4" checked>静态</label><label class="opt"><input type="radio" name="v4">DHCP</label></div>
                    <div class="ip-row"><label class="cap" for="ip1">IP 地址：</label><div class="ip"><input id="ip1" value="192"><b>.</b><input aria-label="IP 2" value="168"><b>.</b><input aria-label="IP 3" value="0"><b>.</b><input aria-label="IP 4" value="1"></div></div>
                    <div class="ip-row"><label class="cap" for="mk1">子网掩码：</label><div class="ip"><input id="mk1" value="255"><b>.</b><input aria-label="掩码 2" value="255"><b>.</b><input aria-label="掩码 3" value="255"><b>.</b><input aria-label="掩码 4" value="0"></div></div>
                    <div class="ip-row mb-0"><label class="cap" for="gw1">网关：</label><div class="ip"><input id="gw1" value="0"><b>.</b><input aria-label="网关 2" value="0"><b>.</b><input aria-label="网关 3" value="0"><b>.</b><input aria-label="网关 4" value="0"></div></div>
                  </div>
                  <div>
                    <div class="pick-row"><label class="opt wide-opt"><input type="checkbox">自动获取 DNS 服务器地址</label></div>
                    <div class="ip-row"><label class="cap dns-cap" for="d1">DNS1:</label><div class="ip"><input id="d1" value="0"><b>.</b><input aria-label="DNS1 2" value="0"><b>.</b><input aria-label="DNS1 3" value="0"><b>.</b><input aria-label="DNS1 4" value="0"></div></div>
                    <div class="ip-row"><label class="cap dns-cap" for="d2">DNS2:</label><div class="ip"><input id="d2" value="0"><b>.</b><input aria-label="DNS2 2" value="0"><b>.</b><input aria-label="DNS2 3" value="0"><b>.</b><input aria-label="DNS2 4" value="0"></div></div>
                  </div>
                </div>
                <div class="ring ring-v4"></div><span class="num num-1">1</span>
              </fieldset>

              <fieldset class="grp">
                <legend><span>IPv6 <em>配置</em></span><svg viewBox="0 0 12 18"><path d="M0 .5 12 17.500" stroke="#e2e2e2" fill="none"/></svg><i></i></legend>
                <div class="grp-in v6">
                  <div class="pick-row"><label class="opt"><input type="radio" name="v6" checked>静态</label><label class="opt"><input type="radio" name="v6">DHCPv6</label></div>
                  <div class="field-row"><label class="cap" for="a6">IPv6 地址：</label><input id="a6" class="txt flex-grow-1" value="::"></div>
                  <div class="field-row"><label class="cap" for="l6">前缀长度：</label><input id="l6" class="txt len" value="128"></div>
                  <div class="field-row mb-0"><label class="cap" for="g6">IPv6 网关：</label><input id="g6" class="txt flex-grow-1" value="::"></div>
                </div>
              </fieldset>

              <div class="d-flex justify-content-end position-relative">
                <span class="num num-2">2</span>
                <button class="apply" type="submit">应用</button>
                <div class="ring ring-go"></div>
              </div>
            </form>
          </div>
        </section>
      </div>
      <div class="vbar d-flex flex-column">
        <button aria-label="向上"><svg width="11" height="6"><use href="#up"/></svg></button>
        <div class="thumb main-thumb"><svg width="13" height="15"><use href="#grip"/></svg></div>
        <button class="mt-auto" aria-label="向下"><svg width="11" height="6"><use href="#down"/></svg></button>
      </div>
    </div>
    <div class="hbar d-flex align-items-center pe-4">
      <button aria-label="向左"><svg width="6" height="11"><path d="M6 0v11L0 5.500z" fill="#333"/></svg></button>
      <div class="thumb low-thumb"><svg width="15" height="13"><path d="M1.500 0v12M6.500 0v12M11.500 0v12" stroke="#555"/><path d="M2.500 0v12M7.500 0v12M12.500 0v12" stroke="#999"/><path d="M4.500 0v12M9.500 0v12M14.500 0v12" stroke="#f4f4f4"/></svg></div>
      <button class="ms-auto" aria-label="向右"><svg width="6" height="11"><path d="M0 0v11l6-5.500z" fill="#333"/></svg></button>
    </div>
  </main>
  <div class="flap position-absolute"><svg width="3" height="7"><path d="M3 0v7L0 3.500z" fill="#56809f"/></svg></div>
</div>

<footer class="status d-flex">
  <span>总数：6&nbsp; 选中：0</span>
  <a href="#" class="ms-auto">获取帮助与反馈</a>
  <svg width="14" height="24"><path d="M4 22 14 12M8 22l6-6M11 22l3-3" stroke="#8fa9bf"/></svg>
</footer>
</div>
</body>
</html>
